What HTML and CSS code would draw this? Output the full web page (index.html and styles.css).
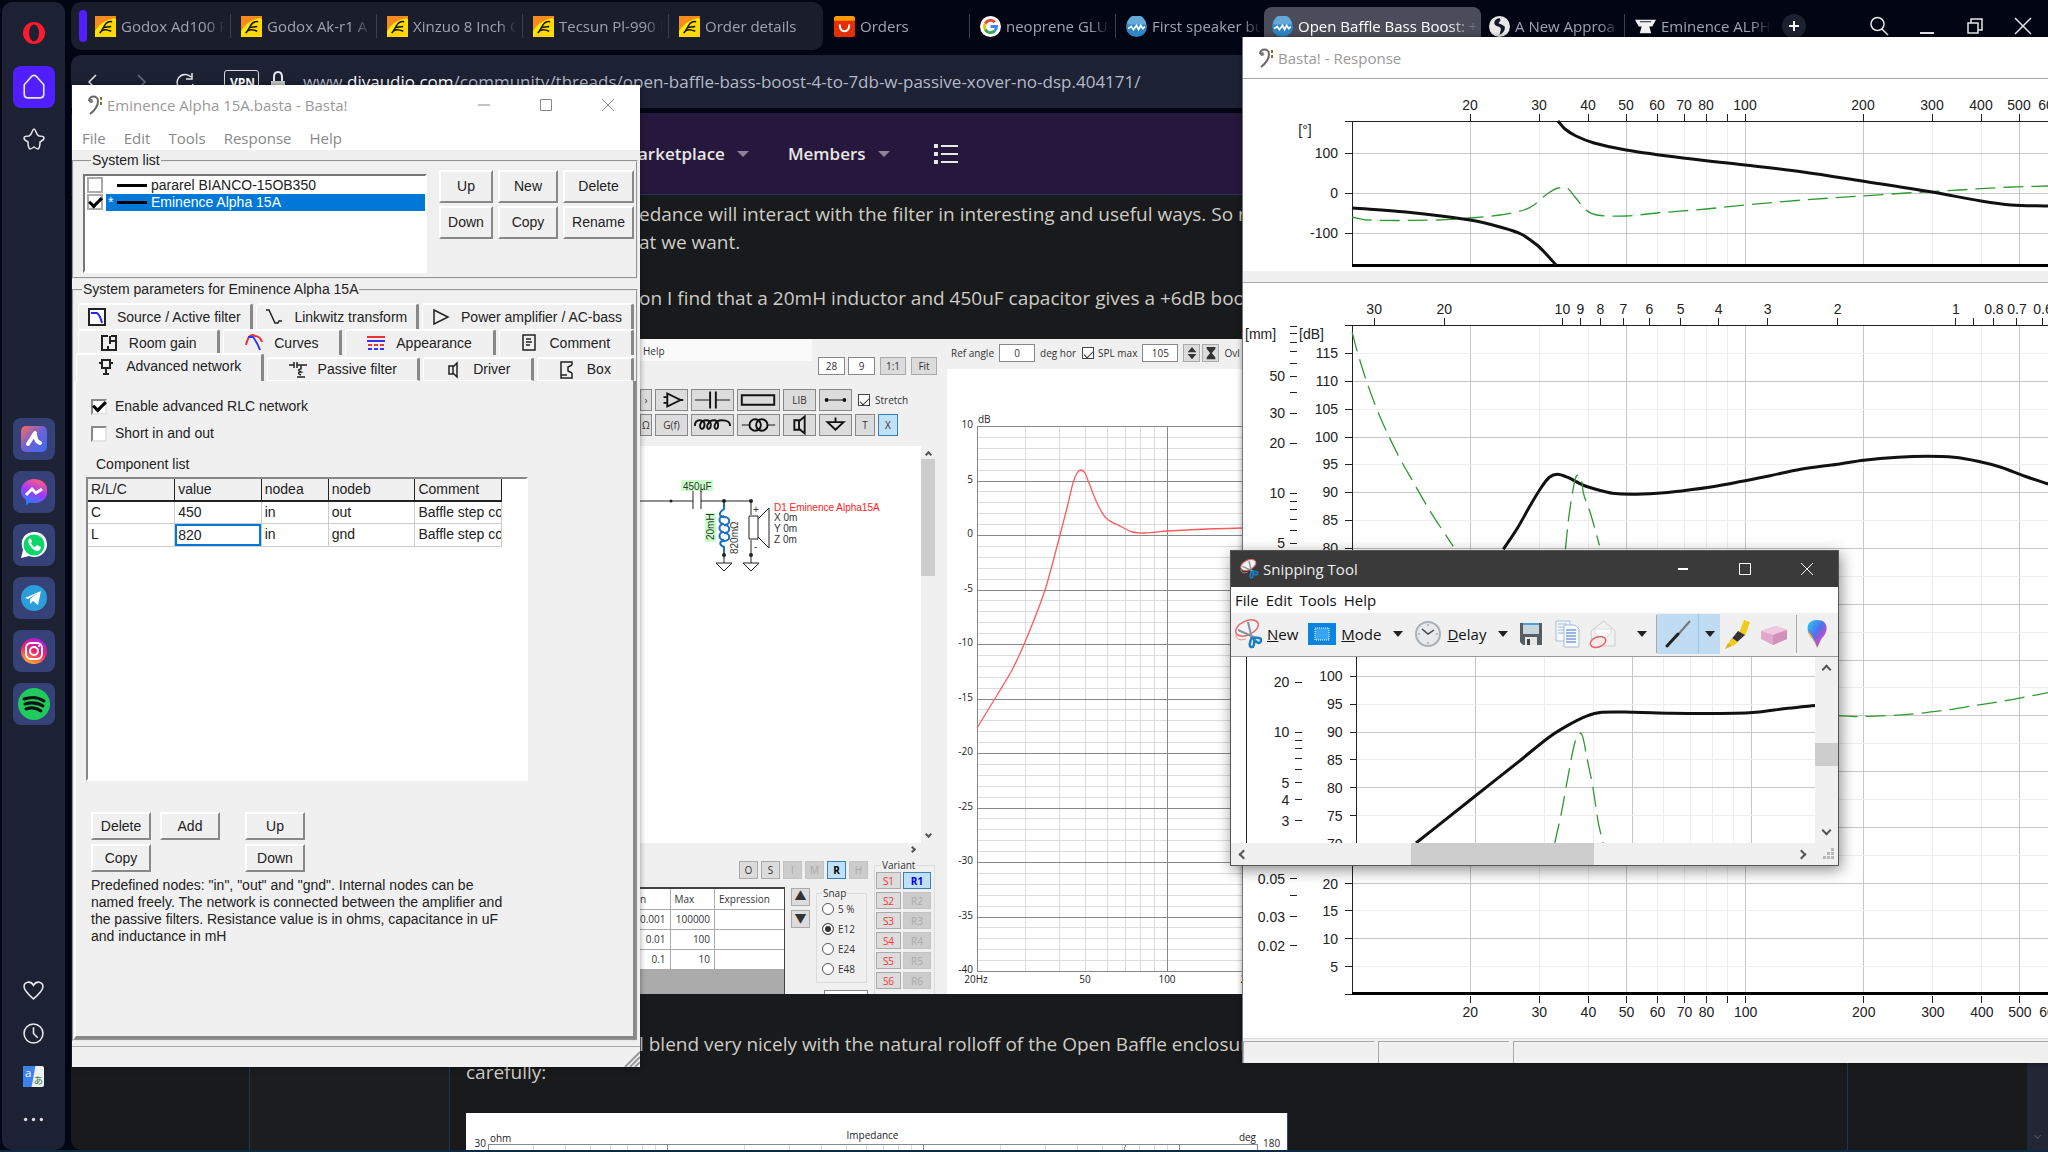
FILE: index.html
```
<!DOCTYPE html>
<html lang="en">

<head>
    <meta charset="UTF-8">
    <meta name="viewport" content="width=device-width, initial-scale=1.0">
    <title>Open Baffle Bass Boost</title>
    <link rel="stylesheet" href="styles.css">
</head>

<body>
    <svg class="defs" aria-hidden="true">
        <symbol id="shop" viewBox="0 0 22 22">
            <rect width="22" height="22" fill="#ffd800" />
            <path d="M0 0h22v3L10 6 0 16z" fill="#f58a1f" />
            <path d="M0 16Q6 5 20 2L22 4Q8 9 0 22z" fill="#ffea00" />
            <path d="M5 18Q8 12 17 16M6 17L10 10M9 12l8-1M10 10q3-5 8-4" stroke="#141400" stroke-width="1.600" fill="none" />
        </symbol>
        <symbol id="diy" viewBox="0 0 20 20">
            <circle cx="10" cy="10" r="10" fill="#2f86c5" />
            <path d="M1 8a9 9 0 0 1 18 0" fill="#65a9da" />
            <path d="M2 12l3-2 2 3 3-4 2 4 2-4 2 3 2-2" stroke="#fff" stroke-width="1.600" fill="none" />
        </symbol>
        <symbol id="clef" viewBox="0 0 16 20">
            <path d="M2 6C2 0 11 0 11 6c0 6-4 10-8 13" stroke="#666" stroke-width="2" fill="none" />
            <circle cx="4" cy="6" r="2" fill="#777" />
            <path d="M13 2h2v3h-2zM13 7h2v3h-2z" fill="#7a7a30" />
        </symbol>
        <symbol id="scissors" viewBox="0 0 28 30">
            <ellipse cx="13" cy="9" rx="12" ry="7" transform="rotate(-25 13 9)" fill="#f3f3f6" stroke="#e46a6a" stroke-width="1.5" />
            <path d="M2 15q-1 8 10 5" stroke="#e99" fill="none" />
            <path d="M14 3l4 17M4 11l18 8" stroke="#8b929a" stroke-width="2" />
            <path d="M18 18q-4 9-1 10 4 1 3-9 8-1 7 3-2 5-8-3" stroke="#1b7fc4" stroke-width="2.5" fill="none" />
        </symbol>
    </svg>

    <nav class="sidebar">
        <svg class="opera" viewBox="0 0 22 22"><ellipse cx="11" cy="11" rx="11" ry="11" fill="#ff1b2d" /><ellipse cx="11" cy="11" rx="5" ry="8.5" fill="#1d2134" /></svg>
        <button class="side-btn home" aria-label="Home"><svg viewBox="0 0 22 24"><path d="M2 10l7-8q2-1.500 4 0l7 8v9q0 3-3 3H5q-3 0-3-3z" /></svg></button>
        <svg class="line-icon star" viewBox="0 0 22 22"><path d="M11 1q1 0 2 3t3 4q5 0 5 2t-4 4q0 6-2 7-1 0-4-2-3 2-4 2-2-1-2-7-4-2-4-4t5-2q2-1 3-4t2-3z" /></svg>
        <div class="apps">
            <button class="side-btn" aria-label="Aria"><svg viewBox="0 0 26 26"><defs><linearGradient id="ga" x1="0" y1="0" x2="1" y2="1"><stop offset="0" stop-color="#ff6a5a" /><stop offset=".5" stop-color="#6a62d8" /><stop offset="1" stop-color="#3a6cf0" /></linearGradient></defs><rect width="26" height="26" rx="5" fill="url(#ga)" /><path d="M7 18l7-11M14 9l1 4M16 15l3 2" stroke="#fff" stroke-width="4" stroke-linecap="round" /></svg></button>
            <button class="side-btn" aria-label="Messenger"><svg viewBox="0 0 26 26"><defs><linearGradient id="gm" x1=".7" y1="0" x2=".3" y2="1"><stop offset="0" stop-color="#ff5f70" /><stop offset=".5" stop-color="#a238ff" /><stop offset="1" stop-color="#1a86ff" /></linearGradient></defs><path d="M13 0c18 0 18 24 0 24l-4-.5L5 26v-5C-5 14 1 0 13 0z" fill="url(#gm)" /><path d="M5 16l6-6 4 4 6-4" stroke="#fff" stroke-width="3" fill="none" /></svg></button>
            <button class="side-btn" aria-label="WhatsApp"><svg viewBox="0 0 26 26"><path d="M0 26l2-8C-2 8 4 0 13 0s13 6 13 13-8 15-18 11z" fill="#fff" /><circle cx="13" cy="13" r="10.500" fill="#0bd66a" /><path d="M9 6q-4 3 1 9t9 3l1-3-4-2-2 2q-3-1-4-4l1-2z" fill="#fff" /></svg></button>
            <button class="side-btn" aria-label="Telegram"><svg viewBox="0 0 26 26"><circle cx="13" cy="13" r="13" fill="#2a9fdb" /><path d="M4 13l16-7-3 14-5-4-3 3v-5l8-6-10 6z" fill="#fff" /></svg></button>
            <button class="side-btn" aria-label="Instagram"><svg viewBox="0 0 26 26"><defs><linearGradient id="gi" x1=".7" y1="0" x2=".3" y2="1"><stop offset="0" stop-color="#a31fe0" /><stop offset=".5" stop-color="#f0206c" /><stop offset="1" stop-color="#ffb52e" /></linearGradient></defs><circle cx="13" cy="13" r="13" fill="url(#gi)" /><rect x="5" y="5" width="16" height="16" rx="5" fill="none" stroke="#fff" stroke-width="2" /><circle cx="13" cy="13" r="4" fill="none" stroke="#fff" stroke-width="2" /><circle cx="18" cy="8" r="1" fill="#fff" /></svg></button>
            <button class="side-btn" aria-label="Spotify"><svg class="big" viewBox="0 0 32 32"><circle cx="16" cy="16" r="16" fill="#1ecb5c" /><path d="M6 11q11-4 20 2M7 16q10-3 18 2M8 21q8-3 15 2" stroke="#111" stroke-width="3" fill="none" stroke-linecap="round" /></svg></button>
        </div>
        <div class="side-bottom">
            <svg class="line-icon" viewBox="0 0 20 20"><path d="M10 18C3 12 1 9 1 6.500 1 2 7 0 10 5c3-5 9-3 9 1.500C19 9 17 12 10 18z" /></svg>
            <svg class="line-icon" viewBox="0 0 20 20"><circle cx="10" cy="10" r="9" /><path d="M10 4v6l4 4" /></svg>
            <svg viewBox="0 0 22 22"><rect width="22" height="22" rx="2" fill="#f0f0f0" /><path d="M0 2q0-2 2-2h11L9 22H2q-2 0-2-2z" fill="#3b82f0" /><text x="2" y="12" font-size="12" fill="#fff">a</text><text x="11" y="19" font-size="10" fill="#2d7d46">あ</text></svg>
            <svg viewBox="0 0 20 20"><g fill="#ddd"><circle cx="2.500" cy="10" r="1.600" /><circle cx="10" cy="10" r="1.600" /><circle cx="17.500" cy="10" r="1.600" /></g></svg>
        </div>
    </nav>

    <main class="browser">
        <div class="tabs">
            <div class="tab-group">
                <span class="group-mark"></span>
                <button class="tab"><svg><use href="#shop" /></svg><span>Godox Ad100 P</span></button>
                <button class="tab"><svg><use href="#shop" /></svg><span>Godox Ak-r1 A</span></button>
                <button class="tab"><svg><use href="#shop" /></svg><span>Xinzuo 8 Inch C</span></button>
                <button class="tab"><svg><use href="#shop" /></svg><span>Tecsun Pl-990 I</span></button>
                <button class="tab last"><svg><use href="#shop" /></svg><span>Order details</span></button>
            </div>
            <button class="tab"><svg viewBox="0 0 22 22"><rect width="22" height="22" rx="3" fill="#e62e04" /><path d="M0 3q0-3 3-3h16q3 0 3 3v2H0z" fill="#ff9a00" /><path d="M6 9q0 7 5 7t5-7" stroke="#fff" stroke-width="2" fill="none" /></svg><span>Orders</span></button>
            <button class="tab"><svg viewBox="0 0 22 22"><circle cx="11" cy="11" r="11" fill="#fff" /><g fill="none" stroke-width="3"><path d="M15.500 6.500A6.200 6.200 0 0 0 5.500 8" stroke="#ea4335" /><path d="M5.500 8a6.200 6.200 0 0 0 0 6" stroke="#fbbc05" /><path d="M5.500 14a6.200 6.200 0 0 0 10 1.500" stroke="#34a853" /><path d="M15.500 15.500q2-2 1.800-4.500H11" stroke="#4285f4" /></g></svg><span>neoprene GLUE</span></button>
            <button class="tab last"><svg><use href="#diy" /></svg><span>First speaker bu</span></button>
            <button class="tab active"><svg><use href="#diy" /></svg><span>Open Baffle Bass Boost: +</span></button>
            <button class="tab"><svg viewBox="0 0 20 20"><circle cx="10" cy="10" r="10" fill="#e8e8e8" /><path d="M10 2q-5 1-5 5 1 3 4 3 3 1 2 4l-1 4q6-3 5-8l-3-2-3-1 2-3z" fill="#15182a" /></svg><span>A New Approa</span></button>
            <button class="tab last"><svg viewBox="0 0 22 22"><path d="M0 4h22l-4 7h-3l2 7H5l2-7H4z" fill="#f2f2f2" /><path d="M5 6h12" stroke="#15182a" /></svg><span>Eminence ALPH</span></button>
            <button class="new-tab" aria-label="New tab"><svg viewBox="0 0 10 10"><path d="M5 0v10M0 5h10" stroke="#fff" stroke-width="2" /></svg></button>
            <div class="win-buttons">
                <svg viewBox="0 0 20 20"><circle cx="8.500" cy="8" r="6.500" /><path d="M13 13l6 6" /></svg>
                <svg viewBox="0 0 20 20"><path d="M3 17h14" stroke-width="2" /></svg>
                <svg viewBox="0 0 20 20"><path d="M3 7h10v10H3zM6 7V3h11v11h-4" /></svg>
                <svg viewBox="0 0 20 20"><path d="M2 2l16 16M18 2L2 18" /></svg>
            </div>
        </div>

        <div class="address">
            <svg viewBox="0 0 12 20"><path d="M9 3L2 10l7 7" /></svg>
            <svg class="dim" viewBox="0 0 12 20"><path d="M3 3l7 7-7 7" /></svg>
            <svg class="reload" viewBox="0 0 20 20"><path d="M16 5a8 8 0 1 0 2 7M17 1v6h-6" /></svg>
            <span class="vpn">VPN</span>
            <svg class="lock" viewBox="0 0 14 22"><path d="M3 11V6q0-5 4-5t4 5v5" stroke-width="2" /><path d="M0 10h14v11H0z" fill="#c9c9c9" stroke="none" /></svg>
            <span class="url">www.<b>diyaudio.com</b>/community/threads/open-baffle-bass-boost-4-to-7db-w-passive-xover-no-dsp.404171/</span>
        </div>

        <div class="page">
            <nav class="site-nav">
                <a href="#">arketplace</a><i class="caret"></i>
                <a href="#" class="members">Members</a><i class="caret"></i>
                <svg viewBox="0 0 24 20"><path d="M0 0h4v4H0zM0 8h4v4H0zM0 16h4v4H0zM7 1h17v2H7zM7 9h17v2H7zM7 17h17v2H7z" fill="#e8e6e3" /></svg>
            </nav>
            <div class="columns">
                <div class="gutter"></div>
                <div class="user"></div>
                <article class="post">
                    <p class="behind">edance will interact with the filter in interesting and useful ways. So n</p>
                    <p class="behind">at we want.</p>
                    <p class="behind space">on I find that a 20mH inductor and 450uF capacitor gives a +6dB boo</p>

                    <div class="cad">
                        <div class="cad-left">
                            <div class="cad-top">
                                <span class="cad-menu">Help</span>
                                <input value="28" aria-label="Columns"><input value="9" aria-label="Rows">
                                <button>1:1</button><button>Fit</button>
                            </div>
                            <div class="cad-tools">
                                <div class="cad-row">
                                    <button class="w12">›</button>
                                    <button class="w33"><svg viewBox="0 0 33 20"><path d="M12 3v14l14-7zM8 7h5M8 13h5M26 10h3" /></svg></button>
                                    <button class="w43"><svg viewBox="0 0 43 20"><path d="M3 10h15M25 10h15" stroke-width="1" /><path d="M19 1v18M25 1v18" /></svg></button>
                                    <button class="w43"><svg viewBox="0 0 43 20"><path d="M4 5h34v10H4z" /></svg></button>
                                    <button class="w33">LIB</button>
                                    <button class="w33"><svg viewBox="0 0 33 20"><path d="M7 10h19" stroke-width="1" /><circle cx="7" cy="10" r="1" /><circle cx="26" cy="10" r="1" /></svg></button>
                                    <label><input type="checkbox" checked> Stretch</label>
                                </div>
                                <div class="cad-row">
                                    <button class="w12">Ω</button>
                                    <button class="w33">G(f)</button>
                                    <button class="w43"><svg viewBox="0 0 43 20"><path d="M3 11q0-6 5-6c8 0 5 10 2 9S8 5 15 5s5 10 2 9 0-9 6-9 5 10 2 9-1-9 6-9 9 2 9 6" /></svg></button>
                                    <button class="w43"><svg viewBox="0 0 43 20"><path d="M4 10h9M30 10h9" stroke-width="1" /><circle cx="18" cy="10" r="6" /><circle cx="25" cy="10" r="6" /></svg></button>
                                    <button class="w33"><svg viewBox="0 0 33 20"><path d="M11 5h5v10h-5zM16 6l6-5v18l-6-5z" /></svg></button>
                                    <button class="w33"><svg viewBox="0 0 33 20"><path d="M16.500 2v5M8 7h17l-8.500 8z" /></svg></button>
                                    <button class="w20">T</button>
                                    <button class="w20 on">X</button>
                                </div>
                            </div>
                            <div class="cad-canvas">
                                <svg class="schematic" viewBox="640 447 281 397">
                                    <rect x="681" y="481" width="32" height="11" fill="#c8ffc8" />
                                    <text x="683" y="491">450µF</text>
                                    <g fill="none" stroke="#222">
                                        <path d="M640 502h53M701 502h50v14M693 492v18M701 492v18M724 550v14M751 541v23" />
                                        <path d="M749 517h9v23h-9zM758 520l11-11v40l-11-11M716 564h16l-8 8zM743 564h16l-8 8z" />
                                        <path d="M724 502v8c-6 4-5 8 0 8 7 0 7 8 0 8 7 0 7 8 0 8 7 0 7 8 0 8-5 0-5 4 0 6v8" stroke="#1a6fc4" stroke-width="2" />
                                        <path d="M724 517c-6 0-6 8 0 8-6 0-6 8 0 8-6 0-6 8 0 8" stroke="#1a6fc4" stroke-width="2" />
                                    </g>
                                    <g fill="#222"><circle cx="671" cy="502" r="1.500" /><circle cx="724" cy="502" r="2" /><circle cx="751" cy="502" r="2" /><circle cx="724" cy="556" r="2" /><circle cx="751" cy="556" r="2" /></g>
                                    <rect x="705" y="514" width="11" height="29" fill="#c8ffc8" />
                                    <text transform="translate(714 541) rotate(-90)">20mH</text>
                                    <text transform="translate(738 555) rotate(-90)">820mΩ</text>
                                    <text x="753" y="514">+</text><text x="754" y="551">-</text>
                                    <text x="774" y="512" class="red">D1 Eminence Alpha15A</text>
                                    <text x="774" y="522">X 0m</text><text x="774" y="533">Y 0m</text><text x="774" y="544">Z 0m</text>
                                </svg>
                                <div class="cad-scroll"><i class="chev up"></i><b></b><i class="chev down"></i></div>
                            </div>
                            <div class="cad-hscroll"><i class="chev right"></i></div>
                            <div class="cad-bottom">
                                <div class="cad-opts">
                                    <div class="letters"><button>O</button><button>S</button><button disabled>I</button><button disabled>M</button><button class="on">R</button><button disabled>H</button></div>
                                    <div class="cad-lower">
                                        <div class="limits">
                                            <table>
                                                <tr><th>n</th><th>Max</th><th>Expression</th></tr>
                                                <tr><td>0.001</td><td>100000</td><td></td></tr>
                                                <tr><td>0.01</td><td>100</td><td></td></tr>
                                                <tr><td>0.1</td><td>10</td><td></td></tr>
                                            </table>
                                        </div>
                                        <div class="arrows"><button>▲</button><button>▼</button></div>
                                        <div class="snap-col">
                                            <fieldset class="snap">
                                                <legend>Snap</legend>
                                                <label><input type="radio" name="snap"> 5 %</label>
                                                <label><input type="radio" name="snap" checked> E12</label>
                                                <label><input type="radio" name="snap"> E24</label>
                                                <label><input type="radio" name="snap"> E48</label>
                                            </fieldset>
                                            <input aria-label="Snap value">
                                        </div>
                                    </div>
                                </div>
                                <fieldset class="variant">
                                    <legend>Variant</legend>
                                    <button>S1</button><button class="on">R1</button>
                                    <button>S2</button><button disabled>R2</button>
                                    <button>S3</button><button disabled>R3</button>
                                    <button>S4</button><button disabled>R4</button>
                                    <button>S5</button><button disabled>R5</button>
                                    <button>S6</button><button disabled>R6</button>
                                </fieldset>
                            </div>
                        </div>
                        <div class="cad-right">
                            <div class="cad-head">
                                <label>Ref angle <input value="0"></label><span>deg hor</span>
                                <label class="spl"><input type="checkbox" checked> SPL max</label>
                                <input value="105" aria-label="SPL max value">
                                <button aria-label="Step"><svg viewBox="0 0 14 16"><path d="M2 7l5-6 5 6zM2 9l5 6 5-6z" /></svg></button>
                                <button aria-label="Fit range"><svg viewBox="0 0 14 16"><path d="M2 1h10v2L8 8l4 5v2H2v-2l4-5-4-5z" /></svg></button>
                                <span class="ovl">Ovl</span>
                            </div>
                            <svg id="transfer" class="plot small" viewBox="947 369 340 625"></svg>
                        </div>
                    </div>

                    <p class="behind after">l blend very nicely with the natural rolloff of the Open Baffle enclosur</p>
                    <p>carefully:</p>
                    <svg id="impedance" class="plot small" viewBox="466 1113 822 120"></svg>
                </article>
                <div class="page-scroll"><i class="chev down"></i></div>
            </div>
        </div>
    </main>
    <div class="taskbar"></div>

    <!-- main Basta! window -->
    <section class="window basta">
        <header class="title">
            <svg class="app-icon"><use href="#clef" /></svg><span>Eminence Alpha 15A.basta - Basta!</span>
            <div class="title-buttons">
                <svg viewBox="0 0 14 14"><path d="M1 7h12" /></svg>
                <svg viewBox="0 0 14 14"><path d="M1.500 1.500h11v11h-11z" /></svg>
                <svg viewBox="0 0 14 14"><path d="M1 1l12 12M13 1L1 13" /></svg>
            </div>
        </header>
        <nav class="menu"><a href="#">File</a><a href="#">Edit</a><a href="#">Tools</a><a href="#">Response</a><a href="#">Help</a></nav>
        <div class="client">
            <fieldset class="systems">
                <legend>System list</legend>
                <div class="system-list">
                    <label><input type="checkbox"><span><i></i>pararel BIANCO-15OB350</span></label>
                    <label class="selected"><input type="checkbox" checked><span><em>*</em><i></i>Eminence Alpha 15A</span></label>
                </div>
                <div class="system-buttons">
                    <button>Up</button><button>New</button><button>Delete</button>
                    <button>Down</button><button>Copy</button><button>Rename</button>
                </div>
            </fieldset>
            <fieldset class="params">
                <legend>System parameters for Eminence Alpha 15A</legend>
                <div class="tab-rows" role="tablist">
                    <div class="tab-row r1">
                        <button role="tab"><svg viewBox="0 0 18 18"><path d="M1 1h16v16H1z" fill="#fff" stroke="#222" stroke-width="2" /><path d="M3 5h6q3 2 5 10" stroke="#22f" stroke-width="2" fill="none" /></svg>Source / Active filter</button>
                        <button role="tab"><svg viewBox="0 0 18 18"><path d="M1 2h3l6 13h3l1-2h3" stroke="#222" fill="none" stroke-width="1.500" /></svg>Linkwitz transform</button>
                        <button role="tab"><svg viewBox="0 0 18 18"><path d="M2 2v14l14-7z" stroke="#222" fill="none" stroke-width="1.500" /></svg>Power amplifier / AC-bass</button>
                    </div>
                    <div class="tab-row r2">
                        <button role="tab"><svg viewBox="0 0 18 18"><path d="M8 2H2v14h7M8 12v4h8V2h-5M10 2v8M10 7h6" stroke="#222" fill="none" stroke-width="2" /></svg>Room gain</button>
                        <button role="tab"><svg viewBox="0 0 18 18"><path d="M1 11q3-13 9-9 5 0 7 6" stroke="#e33" fill="none" stroke-width="2" /><path d="M3 3h5q4 5 7 13" stroke="#33f" fill="none" stroke-width="2" /></svg>Curves</button>
                        <button role="tab"><svg viewBox="0 0 18 18"><path d="M0 3h18" stroke="#e33" stroke-width="2" /><path d="M0 7h18" stroke="#33f" stroke-width="2" /><path d="M1 11h16" stroke="#e33" stroke-width="2" stroke-dasharray="4 2" /><path d="M1 15h16" stroke="#33f" stroke-width="2" stroke-dasharray="4 2" /></svg>Appearance</button>
                        <button role="tab"><svg viewBox="0 0 18 18"><path d="M3 1h12v15H3zM6 5h5M6 8h6M6 11h4" stroke="#222" fill="none" stroke-width="1.500" /></svg>Comment</button>
                    </div>
                    <div class="tab-row r3">
                        <button role="tab" class="current"><svg viewBox="0 0 18 18"><path d="M5 2h8v8H5zM2 5h3M13 5h3M9 10v6M6 16h6" stroke="#222" fill="none" stroke-width="2" /></svg>Advanced network</button>
                        <button role="tab"><svg viewBox="0 0 18 18"><path d="M0 4h5M5 1v6M8 1v6M8 4h10M12 4v4q-5 1 0 3-5 1 0 3M8 16h8" stroke="#222" fill="none" stroke-width="1.500" /></svg>Passive filter</button>
                        <button role="tab"><svg viewBox="0 0 18 18"><path d="M5 5h4v8H5zM9 6l4-4v14l-4-4" stroke="#222" fill="none" stroke-width="1.500" /></svg>Driver</button>
                        <button role="tab"><svg viewBox="0 0 18 18"><path d="M14 12v5H3V1h11v3M14 4l-4 2v4l4 2M3 14h6" stroke="#222" fill="none" stroke-width="1.500" /></svg>Box</button>
                    </div>
                </div>
                <div class="panel">
                    <label class="check"><input type="checkbox" checked>Enable advanced RLC network</label>
                    <label class="check"><input type="checkbox">Short in and out</label>
                    <div class="list-title">Component list</div>
                    <div class="component-list">
                        <table>
                            <tr><th>R/L/C</th><th>value</th><th class="narrow">nodea</th><th>nodeb</th><th>Comment</th></tr>
                            <tr><td>C</td><td>450</td><td>in</td><td>out</td><td>Baffle step co</td></tr>
                            <tr><td>L</td><td class="edit"><input value="820" aria-label="value"></td><td>in</td><td>gnd</td><td>Baffle step co</td></tr>
                        </table>
                    </div>
                    <div class="component-buttons">
                        <button>Delete</button><button>Add</button><button class="move">Up</button>
                        <button>Copy</button><button class="move">Down</button>
                    </div>
                    <p class="hint">Predefined nodes: "in", "out" and "gnd". Internal nodes can be named freely. The network is connected between the amplifier and the passive filters. Resistance value is in ohms, capacitance in uF and inductance in mH</p>
                </div>
            </fieldset>
        </div>
        <footer class="status"><svg viewBox="0 0 16 16"><path d="M1 16L16 1M6 16L16 6M11 16l5-5" stroke="#999" stroke-width="2" /></svg></footer>
    </section>

    <!-- response window, runs off the right side -->
    <section class="window response">
        <header class="title"><svg class="app-icon"><use href="#clef" /></svg><span>Basta! - Response</span></header>
        <svg id="phase" class="plot" viewBox="1244 79 805 192" preserveAspectRatio="xMinYMin slice"></svg>
        <div class="splitter"></div>
        <svg id="spl" class="plot grow" viewBox="1244 283 804 755" preserveAspectRatio="xMinYMin slice"></svg>
        <footer class="status"><span></span><span></span><span></span></footer>
    </section>

    <section class="window snip">
        <header class="title">
            <svg class="app-icon"><use href="#scissors" /></svg><span>Snipping Tool</span>
            <div class="title-buttons">
                <svg viewBox="0 0 14 14"><path d="M2 7h10" stroke-width="2" /></svg>
                <svg viewBox="0 0 14 14"><path d="M1.500 1.500h11v11h-11z" /></svg>
                <svg viewBox="0 0 14 14"><path d="M1 1l12 12M13 1L1 13" /></svg>
            </div>
        </header>
        <nav class="menu"><a href="#">File</a><a href="#">Edit</a><a href="#">Tools</a><a href="#">Help</a></nav>
        <div class="toolbar">
            <button><svg viewBox="0 0 28 30"><use href="#scissors" /></svg><span><u>N</u>ew</span></button>
            <button class="mode"><svg viewBox="0 0 28 30"><path d="M0 4h28v22H0z" fill="#0a84e0" /><path d="M7 9h14v12H7z" fill="#38a5f0" stroke="#fff" stroke-dasharray="1 1" /></svg><span><u>M</u>ode</span></button>
            <i class="caret"></i>
            <button class="delay"><svg viewBox="0 0 28 30"><circle cx="14" cy="15" r="12" fill="#e6eaed" stroke="#aab0b5" stroke-width="2" /><path d="M8 10l6 5 6-4" stroke="#444" stroke-width="1.500" fill="none" /><path d="M14 5v2M14 23v2M4 15h2M22 15h2" stroke="#888" /></svg><span><u>D</u>elay</span></button>
            <i class="caret"></i>
            <button class="icon save" aria-label="Save"><svg viewBox="0 0 28 30"><path d="M3 4h22v22H6l-3-3z" fill="#585d62" /><path d="M6 4h16v11H6z" fill="#c8d4dc" /><path d="M6 4h16v2H6z" fill="#4aa0d8" /><path d="M8 18h12v8H8z" fill="#e6e6e6" /><path d="M10 20h3v6h-3z" fill="#444" /></svg></button>
            <button class="icon" aria-label="Copy"><svg viewBox="0 0 28 30"><path d="M3 2h14v20H3z" fill="#f6f9fd" stroke="#a9bdd6" /><path d="M5 5h9M5 8h9M5 11h9M5 14h9" stroke="#9fb8dc" /><path d="M11 6h11l4 4v18H11z" fill="#f6f9fd" stroke="#a9bdd6" /><path d="M13 11h10M13 14h10M13 17h10M13 20h10M13 23h10" stroke="#7d9fd8" stroke-width="1.500" /></svg></button>
            <button class="icon" aria-label="Send snip"><svg viewBox="0 0 28 30"><path d="M2 12L15 2l11 10v15H3z" fill="#f1f1f1" stroke="#ccc" /><path d="M6 10h16v4l-8 6-8-6z" fill="#fff" stroke="#ddd" /><ellipse cx="9" cy="23" rx="8" ry="5" transform="rotate(-20 9 23)" fill="#f8eaea" stroke="#d66" stroke-width="1.500" /></svg></button>
            <i class="caret"></i>
            <span class="sep"></span>
            <button class="pen" aria-label="Pen"><svg viewBox="0 0 28 30"><path d="M26 2L12 18" stroke="#777" stroke-width="2" /><path d="M14 15L3 27" stroke="#222" stroke-width="3" stroke-linecap="round" /></svg></button>
            <button class="pen drop" aria-label="Pen colours"><i class="caret"></i></button>
            <button class="icon" aria-label="Highlighter"><svg viewBox="0 0 28 30"><path d="M20 1l6 2-5 14-6-3z" fill="#f2cc1b" /><path d="M14 12l7 4-10 9-5-3z" fill="#333" /><path d="M8 19l6 4-5 4-5-2z" fill="#f2cc1b" /><path d="M4 24l4 3-7 3z" fill="#d9b616" /></svg></button>
            <button class="icon" aria-label="Eraser"><svg viewBox="0 0 28 30"><path d="M1 12l15-5 11 4v9l-14 6-12-6z" fill="#e2a7cd" /><path d="M1 12l15-5 11 4-14 5z" fill="#f0c8e0" /><path d="M13 16v10l14-6v-9z" fill="#cf93bb" /></svg></button>
            <span class="sep"></span>
            <button class="icon" aria-label="Paint 3D"><svg viewBox="0 0 28 30"><defs><linearGradient id="gp" x1="0" y1="0" x2="1" y2="1"><stop offset="0" stop-color="#20d0f0" /><stop offset=".45" stop-color="#5070f0" /><stop offset=".7" stop-color="#c050c0" /><stop offset="1" stop-color="#f04a50" /></linearGradient></defs><path d="M14 1c13 0 11 13 5 18-2 3-3 6-5 10-1-5-3-7-5-10C3 13 2 1 14 1z" fill="url(#gp)" /><path d="M5 12q6 6 9 16l-4-8q-5-4-5-8z" fill="#f8b030" /></svg></button>
        </div>
        <div class="snip-view">
            <svg id="snip" class="plot" viewBox="1231 657 584 185" preserveAspectRatio="xMinYMin slice"></svg>
            <div class="vbar"><i class="chev up"></i><b></b><i class="chev down"></i></div>
        </div>
        <div class="hbar"><i class="chev left"></i><b></b><i class="chev right"></i><svg viewBox="0 0 12 12"><path d="M8 0h3v3H8zM4 4h3v3H4zM8 4h3v3H8zM0 8h3v3H0zM4 8h3v3H4zM8 8h3v3H8z" fill="#b8b8b8" /></svg></div>
    </section>

    <script src="charts.js"></script>
</body>

</html>
```
FILE: styles.css
```
* {
    box-sizing: border-box;
}

body {
    margin: 0;
    height: 100vh;
    display: grid;
    grid-template-columns: 63px 1fr;
    grid-template-rows: 1fr 2px;
    column-gap: 6px;
    padding-left: 2px;
    overflow: hidden;
    background: #020514;
    font-family: "Open Sans", "Noto Sans", "Noto Sans CJK JP", sans-serif;
    position: relative;
}

button,
input {
    font: inherit;
    color: inherit;
    padding: 0;
    margin: 0;
}

button {
    display: flex;
    align-items: center;
    justify-content: center;
    border: 0;
    background: none;
}

a {
    color: inherit;
    text-decoration: none;
}

p {
    margin: 0;
}

fieldset {
    margin: 0;
    padding: 0;
    min-width: 0;
}

.defs {
    position: absolute;
    width: 0;
    height: 0;
}

.caret {
    border: 5px solid transparent;
    border-top: 6px solid #222;
    border-bottom: 0;
}

.chev {
    display: block;
    width: 7px;
    height: 7px;
    border: solid #555;
    border-width: 2px 2px 0 0;
}

.chev.up {
    transform: rotate(-45deg);
}

.chev.right {
    transform: rotate(45deg);
}

.chev.down {
    transform: rotate(135deg);
}

.chev.left {
    transform: rotate(-135deg);
}

/* opera sidebar */
.sidebar {
    margin: 2px 0 0;
    background: #1d2134;
    border-radius: 10px;
    display: flex;
    flex-direction: column;
    align-items: center;
    padding-top: 20px;
}

.opera {
    width: 22px;
    height: 22px;
}

.side-btn {
    width: 42px;
    height: 42px;
    border-radius: 8px;
    background: #364277;
}

.side-btn svg {
    width: 26px;
    height: 26px;
}

.side-btn .big {
    width: 32px;
    height: 32px;
}

.home {
    margin: 22px 0 20px;
    background: #501eff;
}

.home svg,
.line-icon {
    fill: none;
    stroke: #e8e8ee;
    stroke-width: 1.5;
}

.star {
    width: 22px;
    height: 22px;
}

.apps {
    margin-top: 268px;
    display: flex;
    flex-direction: column;
    gap: 11px;
}

.side-bottom {
    margin-top: auto;
    padding-bottom: 20px;
    display: flex;
    flex-direction: column;
    align-items: center;
    gap: 22px;
}

.side-bottom svg {
    width: 21px;
    height: 21px;
}

/* browser chrome */
.browser {
    min-width: 0;
    min-height: 0;
    display: flex;
    flex-direction: column;
}

.tabs {
    height: 55px;
    display: flex;
    padding-top: 2px;
    color: #a0a3ad;
    font-size: 15px;
}

.tab-group {
    display: flex;
    height: 48px;
    border-radius: 10px;
    background: #1a1d2b;
    padding-left: 8px;
    width: 752px;
    margin-right: 3px;
}

.group-mark {
    width: 8px;
    height: 32px;
    margin-top: 8px;
    border-radius: 4px;
    background: #501eff;
}

.tab {
    width: 146px;
    height: 48px;
    padding: 0 2px 0 8px;
    justify-content: flex-start;
    gap: 5px;
}

.tab:not(.last):not(.active)::after {
    content: "";
    width: 1px;
    height: 24px;
    background: #3c404e;
    flex: none;
}

.tab svg {
    width: 21px;
    height: 21px;
    flex: none;
}

.tab span {
    flex: 1;
    text-align: left;
    white-space: nowrap;
    overflow: hidden;
    mask-image: linear-gradient(90deg, #000 82%, transparent);
}

.tab.active {
    width: 217px;
    height: 43px;
    margin-top: 5px;
    padding-bottom: 5px;
    background: #4a4d59;
    border-radius: 8px;
    color: #fff;
}

.new-tab {
    width: 24px;
    height: 24px;
    margin: 12px 0 0 9px;
    border-radius: 50%;
    background: #1d2030;
}

.new-tab svg {
    width: 10px;
    height: 10px;
}

.win-buttons {
    margin: 14px 15px 0 auto;
    display: flex;
    gap: 28px;
}

.win-buttons svg {
    width: 20px;
    height: 20px;
    fill: none;
    stroke: #e6e6e6;
    stroke-width: 1.5;
}

.address {
    height: 53px;
    flex: none;
    display: flex;
    align-items: center;
    padding-left: 16px;
    background: #1c2134;
    border-radius: 10px 0 0 0;
    color: #b4b9c6;
    font-size: 17px;
}

.address svg {
    width: 12px;
    height: 20px;
    fill: none;
    stroke: #e6e6e6;
    stroke-width: 1.5;
}

.address .dim {
    margin-left: 36px;
    stroke: #6a6f7e;
}

.address .reload {
    width: 20px;
    margin: 0 29px 0 28px;
}

.vpn {
    border: 1px solid #d8d8d8;
    border-radius: 3px;
    padding: 0 5px;
    height: 24px;
    width: 35px;
    font-size: 12px;
    line-height: 24px;
    font-weight: bold;
    color: #fff;
}

.address .lock {
    width: 14px;
    height: 22px;
    margin: 0 18px 0 12px;
}

.url b {
    color: #fff;
    font-weight: normal;
}

/* forum page */
.page {
    margin-top: 5px;
    flex: 1;
    min-height: 0;
    display: flex;
    flex-direction: column;
    overflow: hidden;
    background: #181a1b;
    border-radius: 0 0 0 10px;
}

.site-nav {
    height: 82px;
    flex: none;
    background: #26183d;
    border-bottom: 1px solid #2a3556;
    display: flex;
    align-items: center;
    padding-left: 567px;
    color: #e8e6e3;
    font-size: 17px;
    font-weight: 600;
}

.site-nav .caret {
    margin-left: 12px;
    border-width: 6px 6px 0;
    border-top-color: #8d8498;
}

.site-nav .members {
    margin-left: 39px;
}

.site-nav svg {
    width: 24px;
    height: 20px;
    margin-left: 44px;
}

.columns {
    flex: 1;
    min-height: 0;
    display: flex;
}

.gutter {
    width: 179px;
    border-right: 1px solid #233557;
}

.user {
    width: 200px;
    background: #1b1d1e;
    border-right: 1px solid #233557;
}

.post {
    flex: 1;
    min-width: 0;
    margin-right: 179px;
    padding: 5px 0 0 16px;
    border-right: 1px solid #233557;
    color: #cfccc6;
    font-size: 19px;
    line-height: 28px;
    white-space: nowrap;
    overflow: hidden;
}

.behind {
    padding-left: 173px;
}

.space {
    margin-top: 28px;
}

.after {
    margin-top: 36px;
}

#impedance {
    width: 822px;
    height: 120px;
    margin-top: 27px;
    border-right: 1px solid #1d4aa0;
}

.page-scroll {
    width: 21px;
    background: #222635;
    display: flex;
    align-items: flex-end;
    justify-content: center;
    padding-bottom: 12px;
}

.page-scroll .chev {
    width: 5px;
    height: 5px;
    border-width: 1px 1px 0 0;
}

.taskbar {
    grid-column: 1 / -1;
    margin-left: -2px;
    background: #0d2a40;
}

/* crossover simulator inside the post */
.cad {
    width: 822px;
    height: 655px;
    margin-top: 27px;
    padding-left: 174px;
    background: #f0f0f0;
    display: flex;
    overflow: hidden;
    color: #333;
    font-size: 10px;
    line-height: 12px;
}

.cad input {
    background: #fff;
    border: 1px solid #888;
    text-align: center;
}

.cad button {
    background: #dcdcdc;
    border: 1px solid #aaa;
}

.cad label {
    display: flex;
    align-items: center;
    gap: 5px;
}

.cad input[type="checkbox"] {
    appearance: none;
    width: 12px;
    height: 12px;
    border-color: #444;
    display: grid;
    place-items: center;
}

.cad input[type="checkbox"]::after {
    content: "";
    width: 8px;
    height: 4px;
    border: solid #333;
    border-width: 0 0 1px 1px;
    transform: rotate(-45deg);
}

.cad-left {
    width: 307px;
    flex: none;
    display: flex;
    flex-direction: column;
}

.cad-left > div {
    flex: none;
}

.cad-top {
    height: 36px;
    display: flex;
    align-items: flex-end;
    gap: 3px;
}

.cad-top input {
    width: 27px;
    height: 18px;
}

.cad-top button {
    width: 26px;
    height: 18px;
    margin-left: 2px;
}

.cad-menu {
    align-self: flex-start;
    width: 172px;
    height: 22px;
    padding: 6px 3px;
    margin-right: 3px;
    background: #fafafa;
}

.cad-tools {
    width: 298px;
    height: 71px;
    padding-top: 14px;
    display: flex;
    flex-direction: column;
    gap: 3px;
}

.cad-row {
    display: flex;
    gap: 3px;
}

.cad-row button {
    height: 22px;
    flex: none;
    border-color: #888;
}

.cad-row svg {
    width: 100%;
    height: 20px;
    fill: none;
    stroke: #111;
    stroke-width: 2;
}

.cad-row label {
    margin-left: 3px;
}

.w12 {
    width: 12px;
    overflow: hidden;
}

.w20 {
    width: 20px;
}

.w33 {
    width: 33px;
}

.w43 {
    width: 43px;
}

.cad button.on {
    background: #bfe0f7;
    border-color: #3c7fb1;
}

.cad-canvas {
    display: flex;
}

.schematic {
    width: 281px;
    height: 397px;
    background: #fff;
    font: 10px "Liberation Sans", sans-serif;
    fill: #333;
}

.schematic .red {
    fill: #f22;
}

.cad-scroll {
    width: 14px;
    display: flex;
    flex-direction: column;
    align-items: center;
    padding: 6px 0;
}

.cad-scroll .chev,
.cad-hscroll .chev {
    width: 5px;
    height: 5px;
}

.cad-scroll b {
    width: 14px;
    height: 117px;
    margin: 2px 0 auto;
    background: #cdcdcd;
}

.cad-hscroll {
    height: 14px;
    padding: 4px 0 0 270px;
}

.cad-bottom {
    display: flex;
    gap: 4px;
    padding-top: 2px;
}

.letters {
    display: flex;
    gap: 3px;
    padding: 2px 0 8px 99px;
}

.letters button {
    width: 19px;
    height: 18px;
}

.cad button:disabled {
    color: #aaa;
    background: #ccc;
    border-color: #c4c4c4;
}

.cad .letters .on {
    font-weight: bold;
    color: #000;
}

.cad-opts {
    width: 230px;
}

.cad-lower {
    display: flex;
}

.limits {
    width: 145px;
    height: 130px;
    background: #ababab;
    border-top: 2px solid #444;
    border-right: 1px solid #444;
}

.limits table {
    border-collapse: collapse;
    width: 100%;
    background: #fff;
}

.limits th,
.limits td {
    height: 20px;
    padding: 0 4px;
    font-weight: normal;
    text-align: right;
    border: solid #aaa;
    border-width: 0 0 1px 1px;
}

.limits th {
    text-align: left;
}

.limits td:first-child,
.limits th:first-child {
    width: 26px;
    padding: 0 4px 0 0;
    border-left: 0;
}

.limits th:nth-child(2) {
    width: 45px;
}

.limits th:nth-child(3) {
    width: 73px;
}

.arrows {
    margin: 1px 6px 0;
    display: flex;
    flex-direction: column;
    gap: 4px;
}

.arrows button {
    width: 19px;
    height: 18px;
    font-size: 12px;
}

.snap {
    width: 51px;
    height: 96px;
    border: 1px solid #dcdcdc;
}

.snap legend,
.variant legend {
    margin-left: 5px;
    padding: 0 1px;
}

.snap label {
    height: 20px;
    padding-left: 5px;
    gap: 4px;
    white-space: nowrap;
}

.cad .snap input {
    appearance: none;
    width: 12px;
    height: 12px;
    border: 1px solid #555;
    border-radius: 50%;
}

.cad .snap input:checked {
    background: #333;
    box-shadow: inset 0 0 0 2px #fff;
}

.snap-col > input {
    width: 44px;
    height: 18px;
    margin: 7px 0 0 8px;
    display: block;
}

.variant {
    width: 61px;
    height: 150px;
    border: 1px solid #dcdcdc;
    display: grid;
    grid-template-columns: 25px 28px;
    grid-auto-rows: 17px;
    gap: 3px 2px;
    padding: 1px 0 0 1px;
}

.variant button {
    color: #f33;
}

.cad .variant .on {
    color: #00f;
    font-weight: bold;
}

.cad-right {
    width: 340px;
    flex: none;
}

.cad-head {
    height: 30px;
    display: flex;
    align-items: center;
    gap: 5px;
    padding: 0 0 2px 4px;
}

.cad-head input:not([type]) {
    width: 36px;
    height: 18px;
}

.cad-head .spl {
    margin-left: 1px;
    gap: 4px;
}

.cad-head button {
    width: 17px;
    height: 18px;
}

.cad-head button + button {
    margin-left: -3px;
}

.cad-head button svg {
    width: 14px;
    height: 14px;
    fill: #333;
}

/* plots */
.plot {
    display: block;
    background: #fff;
    font: 14px "Liberation Sans", sans-serif;
    fill: #222;
}

.plot.small {
    font: 10px "Open Sans", sans-serif;
}

.cad-right .plot {
    width: 340px;
    height: 625px;
}

.plot line {
    stroke: #222;
    shape-rendering: crispEdges;
}

.plot line.major {
    stroke: #c6c6c6;
}

.plot line.minor {
    stroke: #eee;
}

.plot.small line.major {
    stroke: #888;
}

.plot.small line.minor {
    stroke: #dcdcdc;
}

.plot line.base {
    stroke: #000;
    stroke-width: 3;
}

.plot path {
    fill: none;
    stroke: #111;
    stroke-width: 3;
}

.plot path.green {
    stroke: #2f9a2f;
    stroke-width: 1.3;
    stroke-dasharray: 20 8;
}

.plot path.red {
    stroke: #ff5a5a;
    stroke-width: 1.3;
}

/* desktop windows */
.window {
    position: absolute;
    display: flex;
    flex-direction: column;
    background: #f0f0f0;
    box-shadow: 0 0 6px rgba(0, 0, 0, .4);
}

.title {
    display: flex;
    align-items: center;
    background: #fff;
    color: #999;
    font-size: 15px;
    flex: none;
}

.app-icon {
    width: 16px;
    height: 20px;
    margin-right: 4px;
}

.title-buttons {
    margin-left: auto;
    display: flex;
    gap: 48px;
}

.title-buttons svg {
    width: 14px;
    height: 14px;
    fill: none;
    stroke: #888;
}

.menu {
    display: flex;
    flex: none;
    background: #fff;
    font-size: 15px;
    color: #888;
}

.status {
    flex: none;
    border-top: 1px solid #aaa;
}

.basta {
    left: 72px;
    top: 85px;
    width: 568px;
    height: 982px;
    color: #222;
}

.basta .title {
    height: 43px;
    padding: 0 25px 4px 15px;
}

.basta .menu {
    height: 22px;
    line-height: 20px;
    gap: 18px;
    padding-left: 10px;
}

.client {
    flex: 1;
    padding: 2px 2px 0 0;
    font: 14px/17px "Liberation Sans", sans-serif;
    display: flex;
    flex-direction: column;
    gap: 2px;
}

.client fieldset {
    border: 2px groove #e8e8e8;
}

.client legend {
    margin-left: 8px;
    padding: 0 1px;
    line-height: 17px;
}

.client .systems {
    height: 127px;
    padding: 1px 0 0 9px;
    display: flex;
    gap: 12px;
}

.system-list {
    width: 344px;
    height: 99px;
    margin-top: 4px;
    border: 2px solid #fff;
    border-top-color: #777;
    border-left-color: #777;
    background: #fff;
    padding: 1px 0 0 2px;
}

.system-list label {
    display: flex;
    height: 17px;
    gap: 3px;
}

.system-list input {
    flex: none;
}

.client input[type="checkbox"] {
    appearance: none;
    width: 16px;
    height: 16px;
    background: #fff;
    border: 2px solid #e4e4e4;
    border-top-color: #888;
    border-left-color: #888;
    display: grid;
    place-items: center;
}

.client .system-list input {
    border-color: #aaa;
}

.client input[type="checkbox"]:checked::after {
    content: "";
    width: 10px;
    height: 5px;
    margin-bottom: 3px;
    border: solid #000;
    border-width: 0 0 3px 3px;
    transform: rotate(-45deg);
}

.system-list span {
    flex: 1;
    padding-left: 45px;
    position: relative;
}

.system-list i {
    position: absolute;
    left: 11px;
    top: 7px;
    width: 30px;
    height: 3px;
    background: #000;
}

.system-list em {
    position: absolute;
    left: 2px;
    font-style: normal;
}

.selected span {
    background: #0078d7;
    color: #fff;
}

.system-buttons {
    display: grid;
    grid-template-columns: 54px 60px 71px;
    grid-auto-rows: 33px;
    gap: 3px 5px;
}

.system-buttons button,
.component-buttons button {
    border: 2px solid #fff;
    border-right-color: #888;
    border-bottom-color: #888;
    background: #f0f0f0;
}

.params {
    flex: 1;
    display: flex;
    flex-direction: column;
    margin-bottom: 5px;
}

.tab-row {
    display: flex;
    gap: 3px;
    padding: 0 2px 0 4px;
    height: 26px;
}

.tab-rows {
    margin-top: 5px;
}

.tab-row button {
    flex: 1 1 auto;
    gap: 11px;
    border: solid #fff;
    border-width: 2px 0 0 1px;
    border-right: 3px solid #888;
    border-radius: 3px 3px 0 0;
    white-space: nowrap;
}

.tab-row svg {
    width: 18px;
    height: 18px;
}

.r3 {
    align-items: flex-end;
    padding-left: 2px;
}

.r3 button {
    height: 24px;
    border-bottom: 1px solid #fff;
}

.r3 .current {
    height: 28px;
    padding-bottom: 3px;
    border-bottom: 0;
}

.panel {
    flex: 1;
    border: 2px solid #fff;
    border-top: 0;
    border-right: 3px solid #888;
    border-bottom: 3px solid #888;
    padding: 17px 0 0 15px;
}

.check {
    display: flex;
    align-items: center;
    gap: 8px;
    margin-bottom: 10px;
}

.list-title {
    margin: 14px 0 4px 5px;
}

.component-list {
    width: 442px;
    height: 304px;
    margin-left: -5px;
    background: #fff;
    border: 2px solid #fff;
    border-top-color: #888;
    border-left-color: #888;
}

.component-list table {
    table-layout: fixed;
    width: 414px;
    border-collapse: collapse;
}

.component-list th,
.component-list td {
    height: 22px;
    padding: 0 3px;
    font-weight: normal;
    text-align: left;
    white-space: nowrap;
    overflow: hidden;
    border: 1px solid #ccc;
    border-width: 0 1px 1px 0;
}

.component-list th {
    background: #f0f0f0;
    border-color: #222;
    border-bottom-width: 2px;
}

.component-list .narrow {
    width: 67px;
}

.component-list td.edit {
    padding: 0;
}

.component-list td:last-child {
    padding-right: 0;
}

.edit input {
    width: 100%;
    height: 22px;
    border: 2px solid #0078d7;
    padding-left: 1px;
    background: #fff;
}

.component-buttons {
    margin: 31px 0 5px;
    display: grid;
    grid-template-columns: 60px 60px 60px;
    grid-auto-rows: 28px;
    gap: 4px 9px;
}

.component-buttons .move {
    grid-column: 3;
    margin: 0 -16px 0 16px;
}

.hint {
    width: 424px;
}

.basta .status {
    height: 21px;
    display: flex;
    justify-content: flex-end;
    align-items: flex-end;
}

.basta .status svg {
    width: 16px;
    height: 16px;
}

.response {
    left: 1242px;
    right: 0;
    top: 37px;
    height: 1026px;
    border-left: 1px solid #777;
}

.response .title {
    height: 42px;
    padding-left: 15px;
    border-bottom: 1px solid #aaa;
}

#phase {
    width: 100%;
    height: 192px;
    flex: none;
}

.splitter {
    height: 12px;
    flex: none;
    border-bottom: 1px solid #aaa;
}

.grow {
    width: 100%;
    flex: 1;
    min-height: 0;
}

.response .status {
    height: 25px;
    padding-top: 2px;
    display: flex;
    gap: 4px;
    border-top-color: #ddd;
}

.response .status span {
    width: 131px;
    border: solid #aaa;
    border-width: 1px 0 0 1px;
}

.response .status span:last-child {
    flex: 1;
}

.snip {
    left: 1230px;
    top: 550px;
    width: 609px;
    height: 316px;
    border: 1px solid #555;
    box-shadow: 2px 4px 14px rgba(0, 0, 0, .45);
    color: #111;
}

.snip .title {
    height: 36px;
    padding: 0 24px 0 8px;
    background: #3a3a3a;
    color: #eee;
}

.snip .title-buttons svg {
    stroke: #fff;
}

.snip .app-icon {
    width: 20px;
}

.snip .menu {
    height: 26px;
    line-height: 26px;
    gap: 7px;
    padding-left: 4px;
    color: #111;
}

.toolbar {
    height: 44px;
    flex: none;
    display: flex;
    align-items: center;
    padding: 0 5px 1px 3px;
    border-bottom: 1px solid #999;
    font-size: 15px;
}

.toolbar svg {
    width: 28px;
    height: 30px;
    flex: none;
}

.toolbar button {
    gap: 5px;
    height: 40px;
}

.toolbar .mode {
    margin-left: 10px;
}

.toolbar .delay {
    margin-left: 2px;
}

.toolbar .caret {
    margin: 0 9px 0 12px;
}

.toolbar .icon {
    margin-right: 8px;
}

.toolbar .sep {
    width: 1px;
    height: 38px;
    background: #aaa;
}

.toolbar .pen {
    width: 41px;
    background: #bfdcf3;
}

.toolbar .drop {
    width: 22px;
    margin-right: 4px;
    border-left: 1px solid #9cc8ea;
}

.toolbar .drop .caret {
    margin: 0;
}

.toolbar .sep:last-of-type {
    margin-right: 6px;
}

.toolbar .icon:last-child {
    margin-right: 0;
}

.snip-view {
    flex: 1;
    min-height: 0;
    display: flex;
}

.snip-view .plot {
    flex: 1;
    min-width: 0;
    height: 100%;
}

.vbar {
    width: 23px;
    display: flex;
    flex-direction: column;
    align-items: center;
    padding: 9px 0;
}

.vbar b {
    width: 23px;
    height: 23px;
    margin: 70px 0 auto;
    background: #cdcdcd;
}

.hbar {
    height: 22px;
    flex: none;
    display: flex;
    align-items: center;
    padding: 0 3px 0 9px;
}

.hbar b {
    width: 183px;
    height: 22px;
    margin: 0 auto 0 164px;
    background: #cdcdcd;
}

.hbar svg {
    width: 12px;
    height: 12px;
    margin-left: 18px;
}
```
FILE: charts.js
```
const NS = "http://www.w3.org/2000/svg";

function add(svg, tag, attrs, text) {
    const node = document.createElementNS(NS, tag);
    for (const key in attrs) node.setAttribute(key, attrs[key]);
    if (text !== undefined) node.textContent = text;
    svg.appendChild(node);
}

function line(svg, x1, y1, x2, y2, cls) {
    add(svg, "line", { x1: Math.round(x1), y1: Math.round(y1), x2: Math.round(x2), y2: Math.round(y2), class: cls || "tick" });
}

function label(svg, x, y, text, anchor) {
    add(svg, "text", { x: Math.round(x), y: Math.round(y), "text-anchor": anchor || "middle" }, text);
}

// smooth line through a list of x, y pairs, tangents weighted by the x spacing
function curve(svg, p, cls) {
    let d = `M${p[0]} ${p[1]}`;
    const n = p.length / 2;
    const slope = i => {
        const a = Math.max(0, i - 1);
        const b = Math.min(n - 1, i + 1);
        return (p[2 * b + 1] - p[2 * a + 1]) / (p[2 * b] - p[2 * a]);
    };
    for (let i = 0; i < n - 1; i++) {
        const [x1, y1, x2, y2] = p.slice(2 * i, 2 * i + 4);
        const h = (x2 - x1) / 3;
        d += `C${x1 + h} ${y1 + h * slope(i)} ${x2 - h} ${y2 - h * slope(i + 1)} ${x2} ${y2}`;
    }
    add(svg, "path", { d: d, class: cls || "black" });
}

const freqs = [20, 30, 40, 50, 60, 70, 80, 90, 100, 200, 300, 400, 500, 600];
const majors = [20, 50, 100, 200, 500];

function freqGrid(svg, fx, top, bottom, max) {
    for (const major of [false, true]) {
        for (const f of freqs) {
            if (f <= max && majors.includes(f) === major) line(svg, fx(f), top, fx(f), bottom, major ? "major" : "minor");
        }
    }
}

function freqLabels(svg, fx, y, t1, t2) {
    for (const f of freqs) {
        line(svg, fx(f), t1, fx(f), t2);
        if (f !== 90) label(svg, fx(f), y, f);
    }
}

const fx = f => 1353 + 392.5 * Math.log10(f / 10);

// phase
const phase = document.getElementById("phase");
freqGrid(phase, fx, 121, 264, 600);
for (const deg of [100, 0, -100]) {
    const y = 193 - deg * 0.4;
    line(phase, 1353, y, 2049, y, "major");
    line(phase, 1346, y, 1353, y);
    label(phase, 1339, y + 5, deg, "end");
}
line(phase, 1346, 121, 2049, 121);
line(phase, 1353, 121, 1353, 265);
line(phase, 1353, 265, 2049, 265, "base");
freqLabels(phase, fx, 110, 114, 121);
label(phase, 1306, 135, "[°]");
curve(phase, [1353, 217, 1368, 220, 1439, 220, 1471, 218, 1501, 215, 1525, 210, 1535, 205, 1543, 198, 1551, 192, 1559, 188, 1568, 188, 1576, 197, 1587, 210, 1598, 215, 1627, 216, 1658, 213, 1707, 209, 1746, 205, 1804, 200, 1863, 196, 1908, 193, 1960, 190, 2012, 187, 2049, 186], "green");
curve(phase, [1353, 208, 1407, 212, 1471, 220, 1501, 227, 1522, 234, 1538, 245, 1548, 255, 1557, 265]);
curve(phase, [1559, 121, 1566, 129, 1577, 136, 1595, 143, 1627, 150, 1684, 158, 1746, 165, 1804, 172, 1863, 181, 1933, 192, 1982, 201, 2012, 205, 2049, 206]);

// SPL and excursion
const spl = document.getElementById("spl");
const db = v => 994 - v * 5.575;
freqGrid(spl, fx, 325, 993, 600);
for (let v = 5; v < 120; v += 5) {
    line(spl, 1353, db(v), 2049, db(v), v % 10 ? "minor" : "major");
    line(spl, 1346, db(v), 1353, db(v));
    if (v > 75 || v < 25) label(spl, 1339, db(v) + 5, v, "end");
}
line(spl, 1346, 325, 2049, 325);
line(spl, 1353, 325, 1353, 994);
line(spl, 1346, 994, 1353, 994);
line(spl, 1353, 993, 2049, 993, "base");
freqLabels(spl, fx, 1016, 995, 1002);
for (const cm of [30, 20, 10, 9, 8, 7, 6, 5, 4, 3, 2, 1, 0.9, 0.8, 0.7, 0.6]) {
    const x = 1956 - 393 * Math.log10(cm);
    line(spl, x, 318, x, 325);
    if (cm !== 0.9) label(spl, x, 314, cm);
}
label(spl, 1246, 339, "[mm]", "start");
label(spl, 1300, 339, "[dB]", "start");
const named = [50, 30, 20, 10, 5, 0.05, 0.03, 0.02];
for (const mm of [100, 90, 80, 70, 60, 50, 40, 30, 20, 10, 9, 8, 7, 6, 5, 0.05, 0.04, 0.03, 0.02]) {
    const y = 493 - 167.5 * Math.log10(mm / 10);
    line(spl, 1291, y, 1298, y);
    if (named.includes(mm)) label(spl, 1286, y + 5, mm, "end");
}
curve(spl, [1353, 332, 1358, 351, 1368, 383, 1381, 417, 1399, 455, 1413, 480, 1431, 511, 1454, 546], "green");
curve(spl, [1504, 549, 1518, 528, 1531, 505, 1542, 487, 1550, 477, 1558, 474, 1568, 477, 1584, 485, 1600, 490, 1613, 493, 1632, 494, 1658, 493, 1679, 491, 1716, 486, 1768, 476, 1801, 469, 1838, 464, 1864, 460, 1898, 457, 1927, 456, 1954, 457, 1978, 461, 2001, 467, 2025, 476, 2049, 484]);
curve(spl, [1566, 549, 1569, 520, 1573, 493, 1576, 478, 1579, 475, 1582, 479, 1584, 493, 1591, 513, 1600, 545], "green");
curve(spl, [1810, 713, 1838, 715, 1859, 716, 1906, 714, 1943, 710, 1975, 705, 2012, 699, 2049, 692], "green");

// captured snip
const snip = document.getElementById("snip");
const sx = f => fx(f) + 3;
freqGrid(snip, sx, 657, 842, 100);
for (let v = 70; v <= 100; v += 5) {
    const y = 676 + (100 - v) * 5.56;
    line(snip, 1356, y, 1815, y, v % 10 ? "minor" : "major");
    line(snip, 1349, y, 1356, y);
    label(snip, 1342, y + 5, v, "end");
}
line(snip, 1356, 657, 1356, 842);
line(snip, 1246, 657, 1246, 842);
for (const mm of [30, 20, 10, 9, 8, 7, 6, 5, 4, 3]) {
    const y = 732 - 167.5 * Math.log10(mm / 10);
    line(snip, 1295, y, 1302, y);
    if (mm > 9 || mm < 6) label(snip, 1289, y + 5, mm, "end");
}
curve(snip, [1553, 842, 1560, 810, 1566, 777, 1573, 742, 1578, 733, 1581, 737, 1585, 757, 1591, 787, 1596, 820, 1601, 842], "green");
curve(snip, [1415, 842, 1473, 796, 1516, 762, 1547, 737, 1566, 725, 1584, 716, 1600, 712, 1632, 712, 1669, 713, 1732, 713, 1753, 712, 1785, 708, 1815, 705]);

// filter transfer function
const transfer = document.getElementById("transfer");
const tx = f => 977 + 271.5 * Math.log10(f / 20);
for (const f of [30, 40, 50, 60, 70, 80, 90, 200]) line(transfer, tx(f), 426, tx(f), 971, "minor");
for (let v = 10; v >= -40; v--) {
    if (v % 5) line(transfer, 977, 535 - v * 10.9, 1287, 535 - v * 10.9, "minor");
}
for (let v = 10; v >= -40; v -= 5) {
    line(transfer, 977, 535 - v * 10.9, 1287, 535 - v * 10.9, "major");
    label(transfer, 973, 537 - v * 10.9, v, "end");
}
line(transfer, 977, 426, 977, 971, "major");
line(transfer, tx(100), 426, tx(100), 971, "major");
label(transfer, 978, 423, "dB", "start");
label(transfer, 976, 983, "20Hz");
label(transfer, tx(50), 983, "50");
label(transfer, tx(100), 983, "100");
label(transfer, tx(200), 983, "200");
curve(transfer, [977, 728, 999, 692, 1012, 670, 1025, 642, 1045, 590, 1060, 535, 1067, 508, 1073, 483, 1077, 473, 1081, 470, 1085, 473, 1089, 483, 1097, 503, 1106, 518, 1122, 527, 1132, 532, 1144, 533, 1168, 531, 1207, 529, 1243, 528, 1287, 528], "red");

// impedance, only its top edge is in view
const imp = document.getElementById("impedance");
const ix = f => 668 + 256 * Math.log10(f / 100);
for (const dec of [10, 100, 1000, 10000]) {
    for (let m = 1; m < 10; m++) {
        const f = dec * m;
        if (f > 20 && f < 20000) line(imp, ix(f), 1144, ix(f), 1233, m === 1 ? "major" : "minor");
    }
}
line(imp, 489, 1144, 1258, 1144, "major");
line(imp, 489, 1144, 489, 1233, "major");
line(imp, 1258, 1144, 1258, 1233, "major");
line(imp, 1127, 1144, 1124, 1152, "major");
label(imp, 486, 1147, "30", "end");
label(imp, 490, 1142, "ohm", "start");
label(imp, 873, 1139, "Impedance");
label(imp, 1257, 1141, "deg", "end");
label(imp, 1264, 1147, "180", "start");
```
